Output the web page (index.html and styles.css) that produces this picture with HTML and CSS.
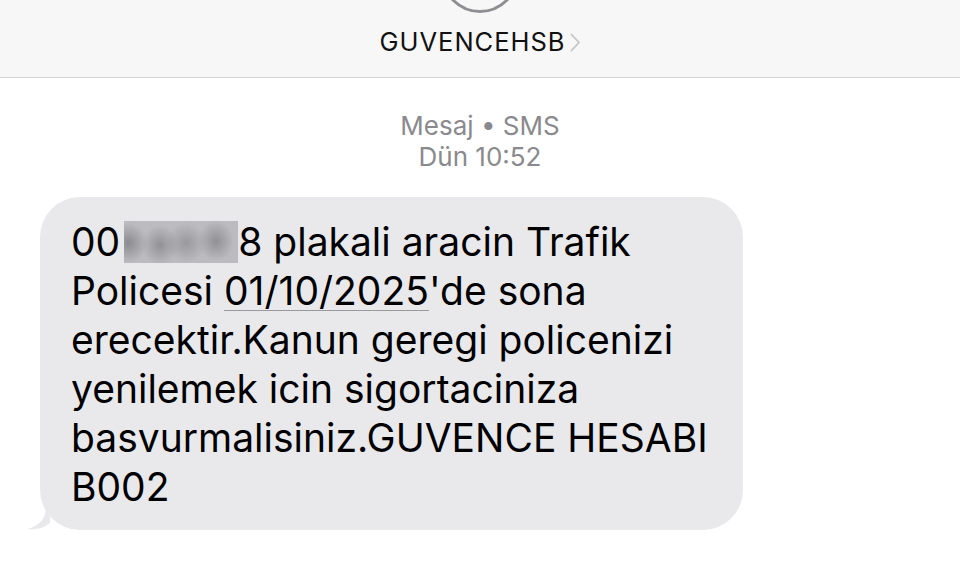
FILE: index.html
```html
<!DOCTYPE html>
<html lang="tr">
<head>
  <meta charset="UTF-8">
  <meta name="viewport" content="width=device-width, initial-scale=1.0">
  <title>GUVENCEHSB</title>
  <link rel="stylesheet" href="styles.css">
</head>
<body>
  <header class="top">
    <div class="avatar"></div>
    <div class="name">GUVENCEHSB <span class="chev">
      <svg width="11" height="19" viewBox="0 0 11 19"><path d="M1.5 1.5 L9 9.5 L1.5 17.5" fill="none" stroke="#c4c4c7" stroke-width="1.8" stroke-linecap="round" stroke-linejoin="round"/></svg>
    </span></div>
  </header>

  <div class="meta">
    <div>Mesaj • SMS</div>
    <div>Dün 10:52</div>
  </div>

  <div class="thread">
    <div class="bubble">
      <svg class="tail" width="26" height="24" viewBox="0 0 26 24"><path d="M22 0 C22 11 18 18 4 23 C13 24 20 22 26 17 L26 0 Z" fill="#e9e9eb"/></svg>
      <p class="msg">00<span class="blur"></span>8 plakali aracin Trafik<br>Policesi <span class="date">01/10/2025</span>'de sona<br>erecektir.Kanun geregi policenizi<br>yenilemek icin sigortaciniza<br>basvurmalisiniz.GUVENCE HESABI<br>B002</p>
    </div>
  </div>
</body>
</html>
```

FILE: styles.css
```css
html, body { margin: 0; padding: 0; }
body {
  font-family: Inter, "Liberation Sans", sans-serif;
  background: #fff;
  color: #000;
  width: 960px;
  overflow: hidden;
}

.top {
  position: relative;
  height: 77px;
  background: #f7f7f7;
  border-bottom: 1px solid #d4d4d6;
  display: flex;
  align-items: flex-end;
  justify-content: center;
  overflow: hidden;
}
.avatar {
  position: absolute;
  left: 441px;
  top: -65px;
  width: 72px;
  height: 72px;
  border: 3.5px solid #8e8e93;
  border-radius: 50%;
}
.name {
  font-size: 25.5px;
  letter-spacing: 1px;
  margin-bottom: 20px;
  display: flex;
  align-items: center;
  gap: 4px;
  color: #111;
}
.chev { display: flex; align-items: center; margin-top: 1px; }

.meta {
  margin-top: 32px;
  text-align: center;
  color: #8a8a8e;
  font-size: 26px;
  line-height: 31px;
}

.thread {
  padding: 0 0 0 40px;
  margin-top: 25px;
}
.bubble {
  position: relative;
  width: 703px;
  box-sizing: border-box;
  background: #e9e9eb;
  border-radius: 40px;
  padding: 20px 20px 19px 31px;
}
.tail {
  position: absolute;
  left: -16px;
  bottom: 0;
}
.msg {
  margin: 0;
  font-size: 39px;
  line-height: 49px;
  color: #000;
}
.blur {
  display: inline-block;
  width: 114px;
  height: 42px;
  margin-left: 4px;
  vertical-align: -7px;
  background:
    radial-gradient(ellipse 20px 20px at 4px 22px, rgba(90,90,95,0.5), transparent),
    radial-gradient(ellipse 18px 20px at 36px 24px, rgba(110,110,115,0.55), transparent),
    radial-gradient(ellipse 20px 20px at 62px 22px, rgba(110,110,115,0.45), transparent),
    radial-gradient(ellipse 18px 20px at 92px 20px, rgba(100,100,105,0.5), transparent),
    #bcbcc0;
}
.date {
  text-decoration: underline;
  text-decoration-color: #9a9a9e;
  text-decoration-thickness: 1px;
  text-underline-offset: 5px;
}
```
